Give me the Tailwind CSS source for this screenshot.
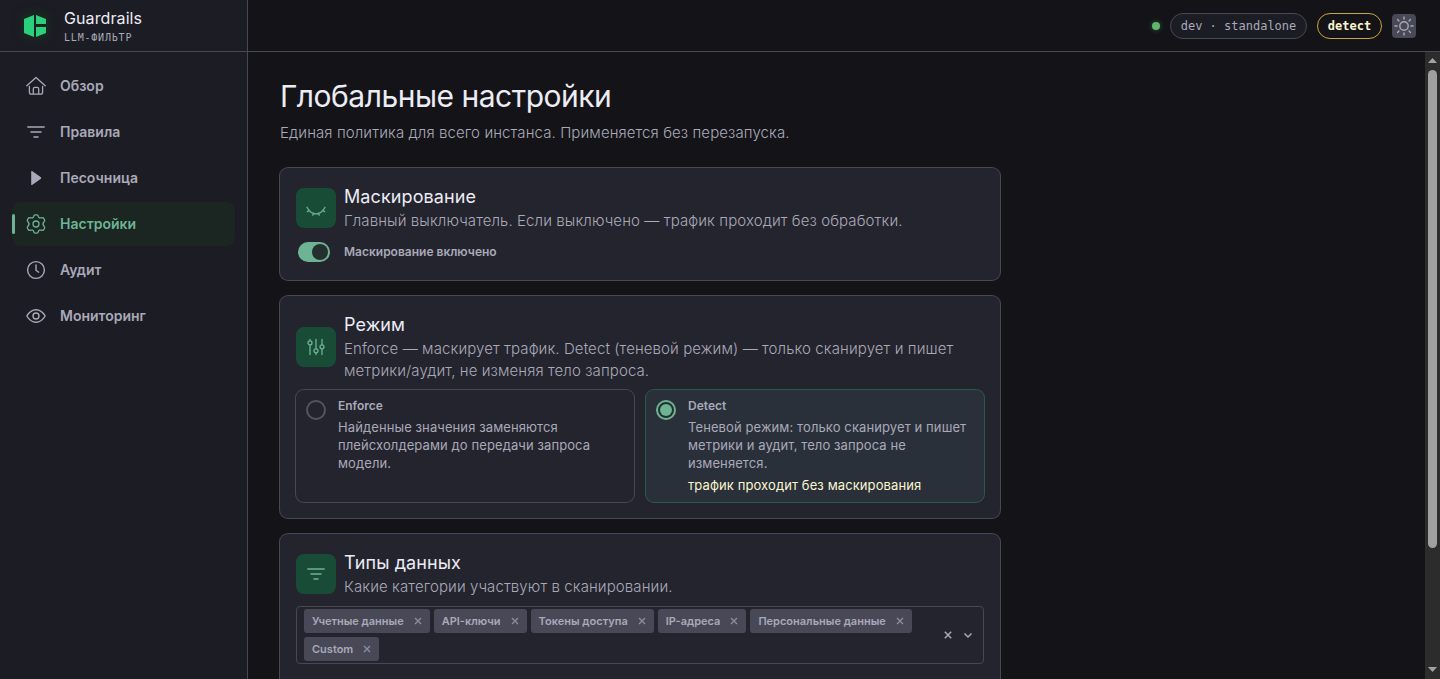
<!DOCTYPE html>
<html lang="ru">
<head>
    <meta charset="UTF-8">
    <meta name="viewport" content="width=device-width, initial-scale=1.0">
    <title>Guardrails — Глобальные настройки</title>
    <script src="https://cdn.jsdelivr.net/npm/@tailwindcss/browser@4"></script>
</head>
<body class="flex h-screen overflow-hidden bg-[#141418] font-['Inter',sans-serif] text-[#a9a9b8]">

    <!-- Боковая панель -->
    <aside class="flex w-62 shrink-0 flex-col border-r border-[#484850] bg-[#1c1c24]">
        <div class="flex h-13 items-center gap-4 border-b border-[#484850] pl-5.5">
            <svg class="size-6.5 rounded-md bg-[#1a2420] shadow-[0_0_6px_3px_#1a2420]" viewBox="0 0 26 26" fill="#2bd07d">
                <path d="M2 6l10-4v22L2 20zM14 2l10 4v5H14zM14 14h10v6l-10 4z"/>
            </svg>
            <div class="pt-0.5">
                <div class="text-base leading-5 tracking-[0.1px] text-[#ececf4]">Guardrails</div>
                <div class="mt-0.5 font-['DejaVu_Sans_Mono',monospace] text-[10px] leading-4 tracking-[0.8px]">LLM-ФИЛЬТР</div>
            </div>
        </div>

        <nav class="flex flex-col gap-0.5 px-3 pt-3 text-sm font-semibold">
            <a class="flex h-11 items-center gap-3.5 pl-3.5">
                <svg class="size-5" viewBox="0 0 20 20" fill="none" stroke="currentColor" stroke-width="1.3" stroke-linecap="round" stroke-linejoin="round"><path d="M.8 9.800L10 1.500l9.200 8.300M3.400 10.500v5.800q0 1.900 1.900 1.900h9.400q1.900 0 1.900-1.900v-5.800M7.300 18v-5q0-1.700 1.700-1.700h2q1.700 0 1.700 1.700v5"/></svg>
                Обзор
            </a>
            <a class="flex h-11 items-center gap-3.5 pl-3.5">
                <svg class="size-5" viewBox="0 0 20 20" fill="none" stroke="currentColor" stroke-width="1.500" stroke-linecap="round"><path d="M1.800 5h16.400M5 10h10M8 15h4"/></svg>
                Правила
            </a>
            <a class="flex h-11 items-center gap-3.5 pl-3.5">
                <svg class="size-5" viewBox="0 0 20 20" fill="currentColor"><path d="M5.200 3.600q0-1 .9-.5l8.800 6.200q.8.7 0 1.400l-8.800 6.200q-.9.5-.9-.5z"/></svg>
                Песочница
            </a>
            <a class="flex h-11 items-center rounded-lg bg-[#1b2521] text-[#6db394]">
                <span class="h-5 w-[3px] rounded-sm bg-[#6db394]"></span>
                <svg class="mr-3.5 ml-[11px] size-5" viewBox="0 0 20 20" fill="none" stroke="currentColor" stroke-width="1.300" stroke-linejoin="round"><path d="M7.700 2.400Q8 .8 9.200.8h1.600q1.200 0 1.500 1.600.5 2.100 3.400 1.400 1.400-.5 2 .6l.8 1.300q.6 1.100-.6 2.200-1.900 2.100 0 4.200 1.200 1.100.6 2.200l-.8 1.300q-.6 1.100-2 .6-2.900-.7-3.400 1.400-.3 1.600-1.500 1.600H9.200q-1.200 0-1.500-1.600-.5-2.100-3.400-1.400-1.400.5-2-.6l-.8-1.300q-.6-1.100.6-2.200 1.900-2.100 0-4.200-1.200-1.100-.6-2.200l.8-1.300q.6-1.100 2-.6 2.900.7 3.400-1.400z"/><circle cx="10" cy="10" r="3"/></svg>
                Настройки
            </a>
            <a class="flex h-11 items-center gap-3.5 pl-3.5">
                <svg class="size-5" viewBox="0 0 20 20" fill="none" stroke="currentColor" stroke-width="1.400" stroke-linecap="round" stroke-linejoin="round"><circle cx="10" cy="10" r="8.400"/><path d="M10 5v5.200l2.700 2"/></svg>
                Аудит
            </a>
            <a class="flex h-11 items-center gap-3.5 pl-3.5">
                <svg class="size-5" viewBox="0 0 20 20" fill="none" stroke="currentColor" stroke-width="1.400"><path d="M.8 10Q4.600 3.700 10 3.700T19.200 10Q15.400 16.300 10 16.300T.8 10z"/><circle cx="10" cy="10" r="3"/></svg>
                Мониторинг
            </a>
        </nav>
    </aside>

    <div class="flex min-w-0 flex-1 flex-col">
        <!-- Верхняя панель -->
        <header class="flex h-13 shrink-0 items-center justify-end border-b border-[#484850] pr-6 font-['DejaVu_Sans_Mono',monospace] text-xs">
            <span class="mr-2.5 size-2 rounded-full bg-[#62b56c] shadow-[0_0_5px_#2d5a35]"></span>
            <span class="mr-2.5 flex h-6.5 w-[137px] items-center justify-center rounded-full border border-[#484850] bg-[#1c1c24]">dev · standalone</span>
            <span class="mr-2.5 flex h-6.5 w-[65px] items-center justify-center rounded-full border border-[#c9a53f] font-bold text-[#fbf5d0]">detect</span>
            <span class="flex size-6 items-center justify-center rounded bg-[#484856]">
                <svg class="size-5" viewBox="0 0 20 20" fill="none" stroke="currentColor" stroke-width="1.400" stroke-linecap="round"><circle cx="10" cy="10" r="4.200"/><path d="M10 .9v2.200M10 16.900v2.200M.9 10h2.200M16.900 10h2.200M3.600 3.600l1.300 1.300M15.100 15.100l1.300 1.300M3.600 16.400l1.300-1.300M15.100 4.900l1.300-1.300"/></svg>
            </span>
        </header>

        <div class="flex min-h-0 flex-1">
            <main class="min-w-0 flex-1 overflow-hidden px-8 pt-6">
                <h1 class="text-[30px] leading-10 tracking-[-0.5px] text-[#ececf4]">Глобальные настройки</h1>
                <p class="mt-1.5 text-[15px] leading-[22px] font-light tracking-[0.1px]">Единая политика для всего инстанса. Применяется без перезапуска.</p>

                <div class="mt-6 flex w-[720px] flex-col gap-4">
                    <!-- Маскирование -->
                    <section class="h-28 rounded-lg bg-[#24242e] p-4 ring-1 ring-[#484850]">
                        <div class="flex items-center gap-2">
                            <span class="flex size-10 shrink-0 items-center justify-center rounded-lg bg-[#184c37] text-[#6db394]">
                                <svg class="size-5" viewBox="0 0 20 20" fill="none" stroke="currentColor" stroke-width="1.300" stroke-linecap="round"><path d="M1 9.200Q4.500 15.800 10 15.800T19 9.200M3.300 12.300l-2 1.400M7.500 15.200l-.8 2M12.500 15.200l.8 2M16.700 12.300l2 1.400"/></svg>
                            </span>
                            <div>
                                <h2 class="text-lg leading-[26px] tracking-[0.1px] text-[#ececf4]">Маскирование</h2>
                                <p class="text-[15px] leading-[22px] font-light tracking-[0.1px]">Главный выключатель. Если выключено — трафик проходит без обработки.</p>
                            </div>
                        </div>
                        <label class="mt-2 flex h-6 items-center pl-0.5 text-xs font-semibold">
                            <span class="mr-3.5 flex h-5 w-8 items-center justify-end rounded-full bg-[#6db394] pr-0.5"><span class="size-4 rounded-full bg-[#24302f]"></span></span>
                            Маскирование включено
                        </label>
                    </section>

                    <!-- Режим -->
                    <section class="rounded-lg bg-[#24242e] p-4 ring-1 ring-[#484850]">
                        <div class="flex items-center gap-2">
                            <span class="flex size-10 shrink-0 items-center justify-center rounded-lg bg-[#184c37] text-[#6db394]">
                                <svg class="size-5" viewBox="0 0 20 20" fill="none" stroke="currentColor" stroke-width="1.300" stroke-linecap="round"><path d="M4 8v9.500M10 2.500v9.200M10 15.800v1.700M16 2.500v5.200M16 11.800v5.700M4 2.500v1.300"/><circle cx="4" cy="5.900" r="2"/><circle cx="10" cy="13.800" r="2"/><circle cx="16" cy="9.800" r="2"/></svg>
                            </span>
                            <div>
                                <h2 class="text-lg leading-[26px] tracking-[0.1px] text-[#ececf4]">Режим</h2>
                                <p class="text-[15px] leading-[22px] font-light tracking-[0.1px]">Enforce — маскирует трафик. Detect (теневой режим) — только сканирует и пишет метрики/аудит, не изменяя тело запроса.</p>
                            </div>
                        </div>
                        <div class="mt-2 grid h-28 grid-cols-2 gap-3">
                            <label class="flex gap-3 rounded-lg px-2.5 pt-2 ring-1 ring-[#484850]">
                                <span class="mt-0.5 size-5 shrink-0 rounded-full border-2 border-[#54545f]"></span>
                                <span class="text-[13px] leading-[18px] tracking-[0.1px]">
                                    <b class="block text-xs leading-4 font-semibold tracking-normal">Enforce</b>
                                    <span class="mt-1 block">Найденные значения заменяются плейсхолдерами до передачи запроса модели.</span>
                                </span>
                            </label>
                            <label class="flex gap-3 rounded-lg bg-[#2a303a] px-2.5 pt-2 ring-1 ring-[#2b584f]">
                                <span class="mt-0.5 flex size-5 shrink-0 items-center justify-center rounded-full border-2 border-[#6db394] bg-[#24302f]"><span class="size-3 rounded-full bg-[#6db394]"></span></span>
                                <span class="text-[13px] leading-[18px] tracking-[0.1px]">
                                    <b class="block text-xs leading-4 font-semibold tracking-normal">Detect</b>
                                    <span class="mt-1 block">Теневой режим: только сканирует и пишет метрики и аудит, тело запроса не изменяется.</span>
                                    <span class="mt-1 block text-[#fbf5d0]">трафик проходит без маскирования</span>
                                </span>
                            </label>
                        </div>
                    </section>

                    <!-- Типы данных -->
                    <section class="h-60 rounded-lg bg-[#24242e] p-4 ring-1 ring-[#484850]">
                        <div class="flex items-center gap-2">
                            <span class="flex size-10 shrink-0 items-center justify-center rounded-lg bg-[#184c37] text-[#6db394]">
                                <svg class="size-5" viewBox="0 0 20 20" fill="none" stroke="currentColor" stroke-width="1.400" stroke-linecap="round"><path d="M1.800 5h16.400M5 10h10M8 15h4"/></svg>
                            </span>
                            <div>
                                <h2 class="text-lg leading-[26px] tracking-[0.1px] text-[#ececf4]">Типы данных</h2>
                                <p class="text-[15px] leading-[22px] font-light tracking-[0.1px]">Какие категории участвуют в сканировании.</p>
                            </div>
                        </div>
                        <div class="mt-2 flex h-[58px] items-center rounded-sm border border-[#484850] pr-[9px] pl-[7px]">
                            <div id="chips" class="flex flex-1 flex-wrap gap-1 text-[11px] font-semibold"></div>
                            <svg class="mr-2 size-3" viewBox="0 0 12 12" fill="none" stroke="currentColor" stroke-width="1.500"><path d="M2.800 2.800l6.400 6.400M9.200 2.800L2.800 9.200"/></svg>
                            <svg class="size-3" viewBox="0 0 12 12" fill="none" stroke="currentColor" stroke-width="1.500"><path d="M2.500 4.500L6 8l3.500-3.500"/></svg>
                        </div>
                    </section>
                </div>
            </main>

            <!-- Полоса прокрутки -->
            <div class="flex w-[15px] shrink-0 flex-col items-center bg-[#2c2c2c]">
                <svg class="h-[18px] w-[15px]" viewBox="0 0 15 18" fill="#a3a3a3"><path d="M3 11l4.500-5 4.500 5z"/></svg>
                <div class="h-[478px] w-[9px] rounded-full bg-[#a0a0a0]"></div>
                <svg class="mt-auto h-[15px] w-[15px]" viewBox="0 0 15 15" fill="#a3a3a3"><path d="M3 3l4.500 5L12 3z"/></svg>
            </div>
        </div>
    </div>

    <script>
        const types = ["Учетные данные", "API-ключи", "Токены доступа", "IP-адреса", "Персональные данные", "Custom"];
        document.getElementById("chips").innerHTML = types.map(name => `
            <span class="flex h-6 items-center rounded-[3px] bg-[#484856] px-2">${name}
                <svg class="ml-2.5 size-2" viewBox="0 0 8 8" fill="none" stroke="#8e8e9c" stroke-width="1.300"><path d="M1 1l6 6M7 1L1 7"/></svg>
            </span>`).join("");
    </script>
</body>
</html>
